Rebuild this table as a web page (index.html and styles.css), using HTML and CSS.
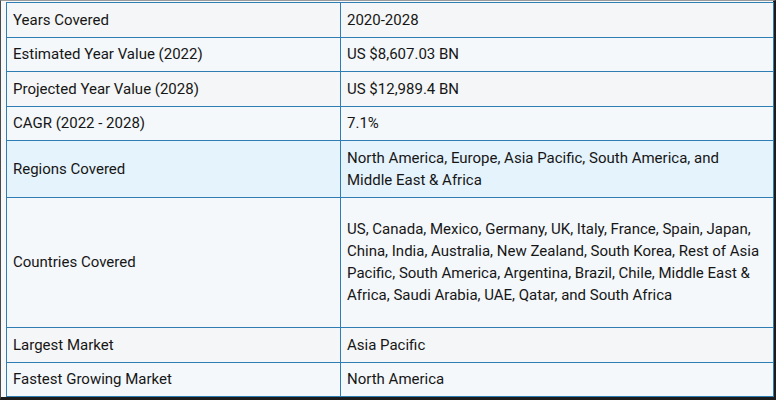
FILE: index.html
```html
<!DOCTYPE html>
<html lang="en">
<head>
<meta charset="utf-8">
<title>Report Scope</title>
<link rel="stylesheet" href="styles.css">
</head>
<body>
<div class="frame">
  <table class="scope">
    <colgroup><col class="c1"><col class="c2"></colgroup>
    <tbody>
      <tr class="odd"><td>Years Covered</td><td>2020-2028</td></tr>
      <tr class="even"><td>Estimated Year Value (2022)</td><td>US $8,607.03 BN</td></tr>
      <tr class="odd"><td>Projected Year Value (2028)</td><td>US $12,989.4 BN</td></tr>
      <tr class="even"><td>CAGR (2022 - 2028)</td><td>7.1%</td></tr>
      <tr class="hl"><td>Regions Covered</td><td>North America, Europe, Asia Pacific, South America, and Middle East &amp; Africa</td></tr>
      <tr class="even tall"><td>Countries Covered</td><td>US, Canada, Mexico, Germany, UK, Italy, France, Spain, Japan, China, India, Australia, New Zealand, South Korea, Rest of Asia Pacific, South America, Argentina, Brazil, Chile, Middle East &amp; Africa, Saudi Arabia, UAE, Qatar, and South Africa</td></tr>
      <tr class="odd"><td>Largest Market</td><td>Asia Pacific</td></tr>
      <tr class="even"><td>Fastest Growing Market</td><td>North America</td></tr>
    </tbody>
  </table>
</div>
</body>
</html>
```
FILE: styles.css
```css
html, body {
  margin: 0;
  padding: 0;
  background: #ffffff;
}
.frame {
  box-sizing: border-box;
  width: 776px;
  height: 400px;
  border-left: 1px solid #4a4a4a;
  border-top: 1px solid #9a9a9a;
  border-right: 3px solid #1c1c1c;
  border-bottom: 3px solid #1c1c1c;
  padding: 1px 0 0 5px;
  background: #f7f8f9;
}
.scope {
  border-collapse: collapse;
  width: 767px;
  table-layout: fixed;
  font-family: Roboto, "Liberation Sans", sans-serif;
  font-size: 15px;
  color: #161616;
}
.c1 { width: 334px; }
.c2 { width: 433px; }
.scope td {
  border: 1px solid #2f7db2;
  padding: 5.75px 6px;
  line-height: 22px;
  vertical-align: middle;
}
.odd td { background: #f5f6f7; }
.even td { background: #f4f8fb; }
.hl td { background: #e5f3fc; }
.tall td { padding-top: 20.75px; padding-bottom: 20.75px; }
```
